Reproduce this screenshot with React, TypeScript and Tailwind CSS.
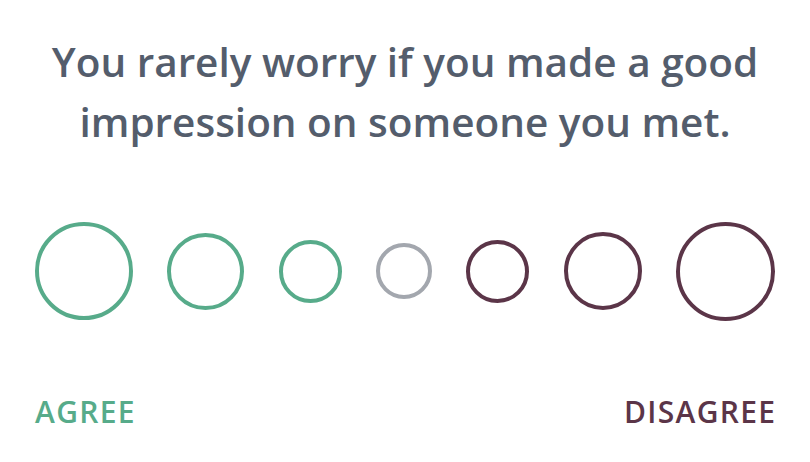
export default function App() {
  const circles = [
    { size: 'w-[98px] h-[98px]', color: 'border-[#57ab8a]' },
    { size: 'w-[77px] h-[77px]', color: 'border-[#57ab8a]' },
    { size: 'w-[63px] h-[63px]', color: 'border-[#57ab8a]' },
    { size: 'w-[56px] h-[56px]', color: 'border-[#a3a7ae]' },
    { size: 'w-[63px] h-[63px]', color: 'border-[#5b3548]' },
    { size: 'w-[78px] h-[78px]', color: 'border-[#5b3548]' },
    { size: 'w-[99px] h-[99px]', color: 'border-[#5b3548]' },
  ]

  return (
    <div className="w-[810px] h-[462px] bg-white font-['Open_Sans',sans-serif] flex flex-col">
      <h1 className="mt-[32px] text-center text-[40.5px] leading-[60px] font-semibold text-[#545d6c] px-4">
        You rarely worry if you made a good
        <br />
        impression on someone you met.
      </h1>

      {/* answer scale */}
      <div className="mt-[69px] px-[35px] flex items-center justify-between h-[100px]">
        {circles.map((c, i) => (
          <div key={i} className={`${c.size} ${c.color} rounded-full border-4 shrink-0`} />
        ))}
      </div>

      <div className="mt-[76px] px-[35px] flex justify-between text-[30px] leading-[30px] tracking-[1.3px] font-semibold">
        <span className="text-[#57ab8a]">AGREE</span>
        <span className="text-[#5b3548] -mr-[1.3px]">DISAGREE</span>
      </div>
    </div>
  )
}
